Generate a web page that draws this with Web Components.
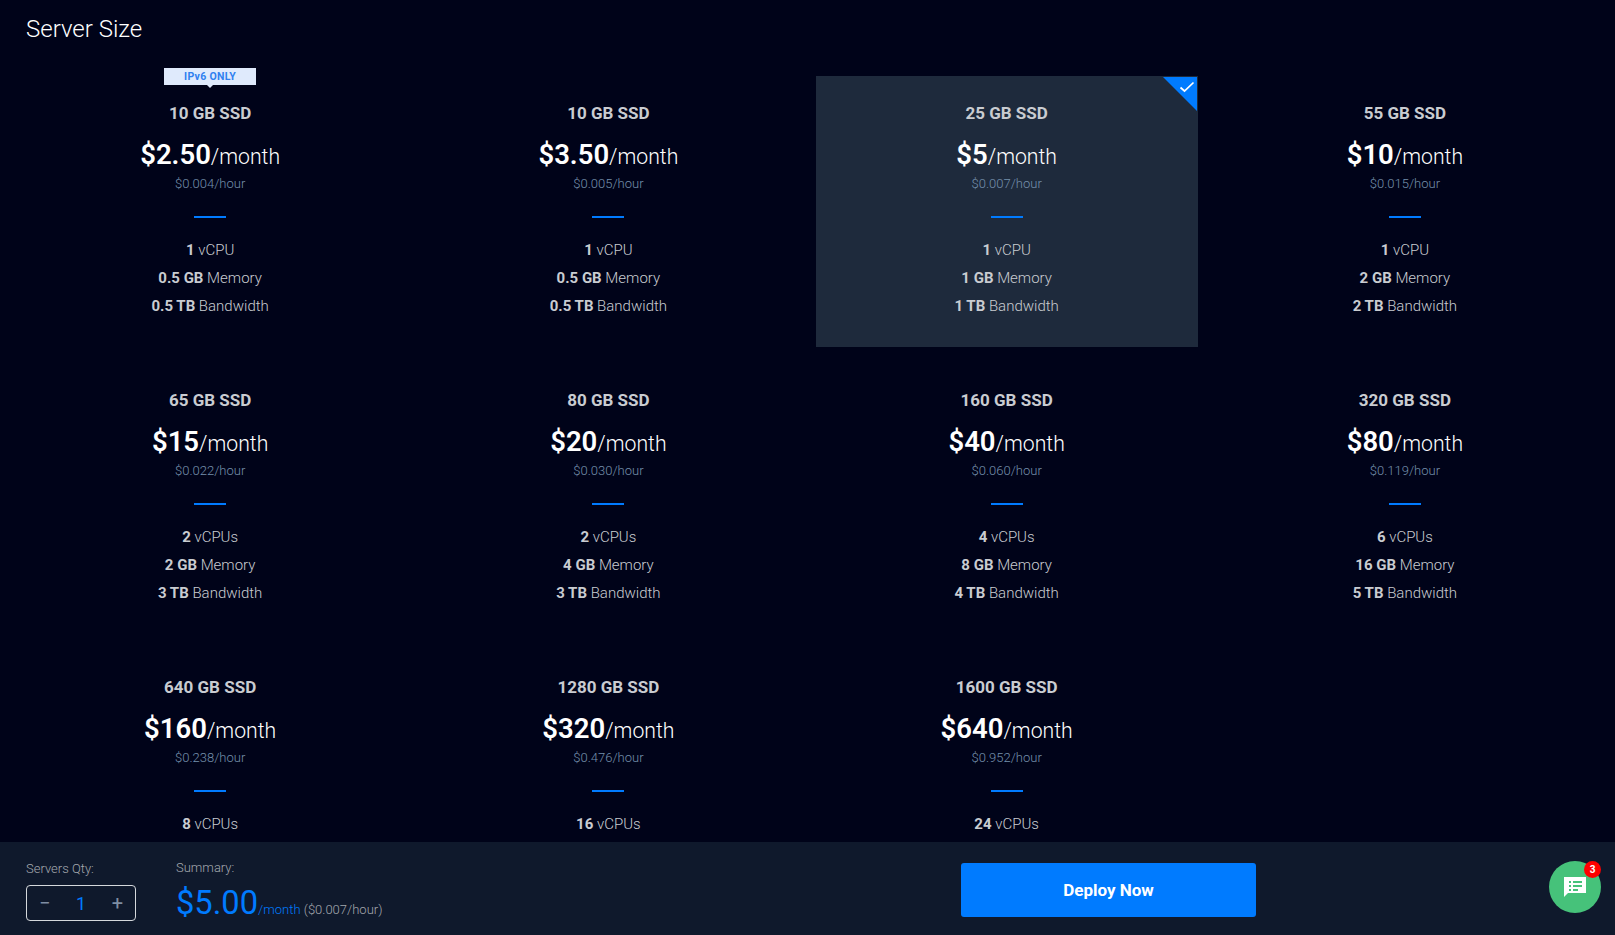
<!DOCTYPE html>
<html><head><meta charset="utf-8">
<style>
html,body{margin:0;padding:0;height:100%;background:#000319;overflow:hidden;font-family:Roboto,sans-serif}
</style></head><body>
<template id="plan-t"><style>
:host{display:block;position:relative;height:271px;box-sizing:border-box;padding-top:27px;text-align:center;color:#c9ccd1;font-family:Roboto,sans-serif}
:host([selected]){background:#1e2a3c}
[hidden]{display:none!important}
.ssd{font-size:17px;font-weight:700;line-height:20px;color:#c9ccd1}
.price{margin-top:14px;height:36px;line-height:36px;color:#fff;font-weight:300;font-size:21.2px}
.price b{font-size:27.5px;font-weight:600}
.hour{margin-top:3px;font-size:13px;line-height:16px;font-weight:300;color:#7590ac}
.rule{width:32px;height:2px;background:#007bff;margin:24px auto 18px}
.spec{font-size:15px;line-height:28px;font-weight:300;color:#c9ccd1}
.spec b{font-weight:700}
.tag{position:absolute;top:-8px;left:50%;margin-left:-46px;width:92px;height:17px;background:#dfeafc;color:#2f80f0;font-size:10.5px;font-weight:700;line-height:17px;letter-spacing:.3px}
.tag:after{content:"";position:absolute;left:50%;margin-left:-3.5px;top:17px;border:3.5px solid transparent;border-top-color:#dfeafc;border-bottom:0}
.check{position:absolute;top:1px;right:1px;width:34px;height:34px}
</style><div class="tag" id="tag" hidden>IPv6 ONLY</div>
<svg class="check" id="check" viewBox="0 0 34 34" style="display:none"><path d="M0 0H34V34Z" fill="#007bff"/><path d="M17.5 10.5l4 3.5 9-8.5" fill="none" stroke="#fff" stroke-width="1.7"/></svg>
<div class="ssd" id="ssd"></div>
<div class="price"><b id="p"></b>/month</div>
<div class="hour" id="h"></div>
<div class="rule"></div>
<div id="specs"></div>
</template>
<template id="grid-t"><style>
:host{display:block;flex:1;min-height:0;overflow:hidden;box-sizing:border-box;padding:0 19px}
h1{margin:0;font-size:24px;font-weight:300;color:#fff;line-height:28px;padding:15px 0 0 7px;height:76px;box-sizing:border-box}
.g{display:grid;grid-template-columns:repeat(4,1fr);column-gap:16px;row-gap:16px}
</style><h1>Server Size</h1><div class="g"><slot></slot></div></template>
<template id="foot-t"><style>
:host{display:flex;height:93px;box-sizing:border-box;background:#0f192c;position:relative;font-family:Roboto,sans-serif;color:#9aa0a8}
.qty{margin-left:26px;width:150px;padding-top:19px}
.lab{font-size:13px;font-weight:300;line-height:16px;color:#a4a8ae}
.box{margin-top:8px;width:110px;height:36px;box-sizing:border-box;border:1px solid #d5d8dc;border-radius:4px;display:flex;align-items:center;justify-content:space-between;padding:0 12px;color:#7f8ea3;font-size:20px}
.box i{font-style:normal;color:#007bff;font-size:18px}
.sum{padding-top:18px;width:785px}
.amt{display:flex;align-items:baseline;margin-top:8px;font-size:13px;font-weight:300;color:#a4a8ae;white-space:pre}
.amt b{font-size:32.7px;font-weight:400;color:#007bff}
.amt span{color:#007bff}
.btn{align-self:flex-start;margin-top:21px;width:295px;height:54px;background:#007bff;border-radius:3px;color:#fff;font-size:17px;font-weight:700;display:flex;align-items:center;justify-content:center}
</style>
<div class="qty"><div class="lab">Servers Qty:</div><div class="box"><span>−</span><i>1</i><span>+</span></div></div>
<div class="sum"><div class="lab">Summary:</div><div class="amt"><b>$5.00</b><span>/month</span> ($0.007/hour)</div></div>
<div class="btn">Deploy Now</div></template>
<template id="chat-t"><style>
:host{display:block;position:absolute;left:1549px;top:861px;width:52px;height:52px;border-radius:50%;background:#46c27a}
svg{position:absolute;left:15px;top:15px;width:22px;height:22px}
.n{position:absolute;right:0;top:0;width:17px;height:17px;border-radius:50%;background:#f00;color:#fff;font:700 10px/17px Roboto,sans-serif;text-align:center}
</style><svg viewBox="0 0 22 22"><path fill="#fff" d="M0 1H22V17H4L0 21Z"/><path fill="#46c27a" d="M5 5h2v2H5zM9 5h9v2H9zM5 9h2v2H5zM9 9h9v2H9zM5 13h2v2H5zM9 13h5v2H9z"/></svg><div class="n">3</div></template>
<server-page></server-page>
<script>
function tpl(id,el){const r=el.attachShadow({mode:'open'});r.appendChild(document.getElementById(id).content.cloneNode(true));return r}
class PlanCard extends HTMLElement{connectedCallback(){if(this.shadowRoot)return;const r=tpl('plan-t',this),a=k=>this.getAttribute(k);
r.getElementById('ssd').textContent=a('ssd');r.getElementById('p').textContent=a('price');r.getElementById('h').textContent=a('hour');
if(this.hasAttribute('selected'))r.getElementById('check').style.display='block';
if(this.hasAttribute('ipv6'))r.getElementById('tag').hidden=false;
const s=r.getElementById('specs');(a('specs')||'').split('|').forEach(x=>{const [b,t]=x.split(':');const d=document.createElement('div');d.className='spec';const e=document.createElement('b');e.textContent=b;d.append(e,' '+t);s.append(d)})}}
class PlanGrid extends HTMLElement{constructor(){super();tpl('grid-t',this)}}
class DeployBar extends HTMLElement{constructor(){super();tpl('foot-t',this)}}
class ChatBubble extends HTMLElement{constructor(){super();tpl('chat-t',this)}}
class ServerPage extends HTMLElement{constructor(){super();const r=this.attachShadow({mode:'open'});
const P=[['10 GB SSD','$2.50','$0.004/hour','1:vCPU|0.5 GB:Memory|0.5 TB:Bandwidth',' ipv6'],['10 GB SSD','$3.50','$0.005/hour','1:vCPU|0.5 GB:Memory|0.5 TB:Bandwidth',''],['25 GB SSD','$5','$0.007/hour','1:vCPU|1 GB:Memory|1 TB:Bandwidth',' selected'],['55 GB SSD','$10','$0.015/hour','1:vCPU|2 GB:Memory|2 TB:Bandwidth',''],['65 GB SSD','$15','$0.022/hour','2:vCPUs|2 GB:Memory|3 TB:Bandwidth',''],['80 GB SSD','$20','$0.030/hour','2:vCPUs|4 GB:Memory|3 TB:Bandwidth',''],['160 GB SSD','$40','$0.060/hour','4:vCPUs|8 GB:Memory|4 TB:Bandwidth',''],['320 GB SSD','$80','$0.119/hour','6:vCPUs|16 GB:Memory|5 TB:Bandwidth',''],['640 GB SSD','$160','$0.238/hour','8:vCPUs',''],['1280 GB SSD','$320','$0.476/hour','16:vCPUs',''],['1600 GB SSD','$640','$0.952/hour','24:vCPUs','']];
r.innerHTML='<style>:host{display:flex;flex-direction:column;height:100vh;position:relative}</style><plan-grid>'+P.map(p=>`<plan-card ssd="${p[0]}" price="${p[1]}" hour="${p[2]}" specs="${p[3]}"${p[4]}></plan-card>`).join('')+'</plan-grid><deploy-bar></deploy-bar><chat-bubble></chat-bubble>'}}
customElements.define('plan-card',PlanCard);customElements.define('plan-grid',PlanGrid);customElements.define('deploy-bar',DeployBar);customElements.define('chat-bubble',ChatBubble);customElements.define('server-page',ServerPage);
</script></body></html>
